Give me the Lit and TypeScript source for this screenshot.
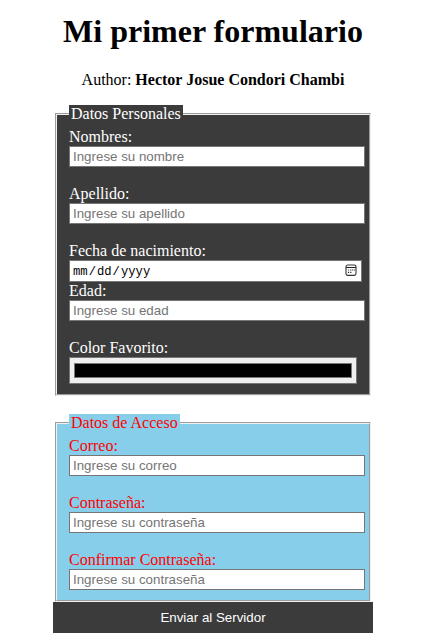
import { LitElement, html, css, svg } from "lit";
import { customElement } from "lit/decorators.js";

const calendar = svg`
  <rect x="1" y="1" width="10" height="10.4" rx="1.8" fill="none" stroke="#333" stroke-width="1.1"/>
  <path d="M1 3.5H11" stroke="#222" stroke-width="1"/>
  <path d="M5.2 6H6.4M7.2 6H8.4M9 6H9.8M2.9 8.3H4.1M5.2 8.3H6.4M3.2 6H4.1" stroke="#222" stroke-width="1.2"/>`;

@customElement("app-root")
export class AppRoot extends LitElement {
  static styles = css`
    :host {
      display: block;
      height: 641px;
      overflow: hidden;
      background: #fff;
      color: #000;
      font: 16px/18px "Liberation Serif", "Times New Roman", serif;
    }
    h1 {
      margin: 0;
      padding-top: 13px;
      font-size: 32px;
      line-height: 36px;
      text-align: center;
    }
    .author {
      margin: 22px 0 16px;
      text-align: center;
    }
    form {
      width: 320px;
      margin: 0 auto;
    }
    fieldset {
      box-sizing: border-box;
      width: 316px;
      min-width: 0;
      margin: 0 2px;
      padding: 5px 12px 10px;
      border: 2px groove #f0f0f0;
    }
    legend {
      padding: 0 2px;
    }
    .personal,
    .personal legend {
      background: #3b3b3b;
      color: #fff;
    }
    .personal {
      height: 291px;
    }
    .access {
      margin-top: 18px;
      height: 188px;
    }
    .access,
    .access legend {
      background: skyblue;
      color: red;
    }
    label {
      display: block;
      height: 18px;
    }
    .text {
      display: block;
      box-sizing: border-box;
      width: 296px;
      height: 21px;
      padding: 2px 3px;
      border: 1px solid #767676;
      border-radius: 0;
      background: #fff;
      font: 13.333px "Liberation Sans", Arial, sans-serif;
    }
    .text::placeholder {
      color: #757575;
    }
    .gap {
      margin-bottom: 18px;
    }
    .date {
      box-sizing: border-box;
      display: flex;
      align-items: center;
      justify-content: space-between;
      width: 293px;
      height: 22px;
      padding: 0 4px 0 2px;
      border: 1px solid #767676;
      background: #fff;
      color: #000;
      font: 12.2px/20px "Liberation Mono", monospace;
    }
    .date > span {
      padding-top: 2px;
    }
    .date span span {
      padding: 0 1px;
    }
    .date svg {
      width: 12px;
      height: 13px;
      margin-bottom: 1px;
    }
    .color {
      box-sizing: border-box;
      width: 288px;
      height: 27px;
      padding: 5px 4px;
      border: 1px solid #767676;
      background: #efefef;
    }
    .swatch {
      box-sizing: border-box;
      height: 15px;
      border: 1px solid #777;
      background: #000;
    }
    button {
      display: block;
      width: 320px;
      height: 31px;
      padding: 0;
      border: 0;
      background: #3b3b3b;
      color: #fff;
      font: 13.333px "Liberation Sans", Arial, sans-serif;
    }
  `;

  private field(label: string, placeholder: string, type = "text", gap = true) {
    return html`<label>${label}</label
      ><input class="text ${gap ? "gap" : ""}" type=${type} placeholder=${placeholder} />`;
  }

  render() {
    return html`
      <h1>Mi primer formulario</h1>
      <div class="author">Author: <b>Hector Josue Condori Chambi</b></div>
      <form>
        <fieldset class="personal">
          <legend>Datos Personales</legend>
          ${this.field("Nombres:", "Ingrese su nombre")}
          ${this.field("Apellido:", "Ingrese su apellido")}
          <label>Fecha de nacimiento:</label>
          <div class="date">
            <span><span>mm</span>/<span>dd</span>/<span>yyyy</span></span>
            <svg viewBox="0 0 12 13">${calendar}</svg>
          </div>
          ${this.field("Edad:", "Ingrese su edad")}
          <label>Color Favorito:</label>
          <div class="color"><div class="swatch"></div></div>
        </fieldset>
        <fieldset class="access">
          <legend>Datos de Acceso</legend>
          ${this.field("Correo:", "Ingrese su correo")}
          ${this.field("Contraseña:", "Ingrese su contraseña", "password")}
          ${this.field("Confirmar Contraseña:", "Ingrese su contraseña", "password", false)}
        </fieldset>
        <button type="button">Enviar al Servidor</button>
      </form>
    `;
  }
}
